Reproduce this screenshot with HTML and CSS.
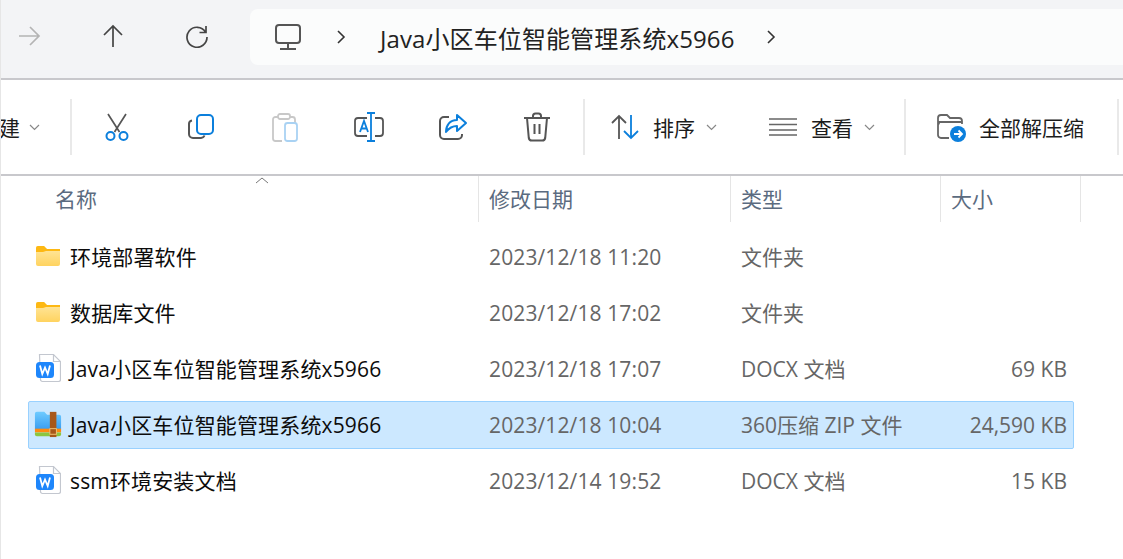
FILE: index.html
```html
<!DOCTYPE html>
<html lang="zh-CN">
<head>
  <meta charset="UTF-8">
  <title>Java小区车位智能管理系统x5966</title>
  <link rel="stylesheet" href="styles.css">
</head>
<body>
  <svg class="defs" width="0" height="0">
    <defs>
      <linearGradient id="folderFill" x1="0" y1="0" x2="0" y2="1">
        <stop offset="0" stop-color="#ffe9a6"/>
        <stop offset="1" stop-color="#ffd35f"/>
      </linearGradient>
      <linearGradient id="zipFill" x1="0" y1="0" x2="0" y2="1">
        <stop offset="0" stop-color="#6fcbff"/>
        <stop offset="1" stop-color="#3a9df0"/>
      </linearGradient>
      <symbol id="folder" viewBox="0 0 26 22">
        <path d="M1 3a2 2 0 0 1 2-2h6l3 3h11a2 2 0 0 1 2 2v13a2 2 0 0 1-2 2H3a2 2 0 0 1-2-2z" fill="url(#folderFill)"/>
        <path d="M1 3a2 2 0 0 1 2-2h6l3 3h13v2H11L8 7H1z" fill="#fdb813"/>
      </symbol>
      <symbol id="wordDoc" viewBox="0 0 26 30">
        <path d="M4.500 1.500h14l7 7v18a2 2 0 0 1-2 2h-16a2 2 0 0 1-2-2z" fill="#fff" stroke="#c3c7cf" stroke-width="1.200"/>
        <path d="M18.500 1.500v7h7" fill="none" stroke="#c3c7cf" stroke-width="1.200"/>
        <rect x="1" y="9" width="18" height="16" rx="3.500" fill="#1e86fb"/>
        <path d="M5 12.500l2.300 8.500 2.700-6.500 2.700 6.500 2.300-8.500" fill="none" stroke="#fff" stroke-width="1.800"/>
      </symbol>
    </defs>
  </svg>

  <header class="nav">
    <button class="nav-btn">
      <svg width="24" height="24" viewBox="0 0 24 24" class="stroke-off"><path d="M2 12h20M13 3l9 9-9 9"/></svg>
    </button>
    <button class="nav-btn">
      <svg width="24" height="24" viewBox="0 0 24 24" class="stroke-dark"><path d="M12 23V2M3 11l9-9 9 9"/></svg>
    </button>
    <button class="nav-btn">
      <svg width="24" height="24" viewBox="0 0 24 24" class="stroke-dark"><path d="M20.500 8A10 10 0 1 0 22 13M21 2v6.500h-6.500"/></svg>
    </button>
    <div class="address">
      <svg width="28" height="28" viewBox="0 0 28 28"><rect x="2" y="2" width="24" height="18" rx="3" fill="none" stroke="#555" stroke-width="2"/><path d="M14 20v6M6 26h16" fill="none" stroke="#555" stroke-width="2"/></svg>
      <svg class="crumb" width="10" height="14" viewBox="0 0 10 14"><path d="M2 1l6 6-6 6" fill="none" stroke="#333" stroke-width="1.600"/></svg>
      <span class="path">Java小区车位智能管理系统x5966</span>
      <svg class="crumb" width="10" height="14" viewBox="0 0 10 14"><path d="M2 1l6 6-6 6" fill="none" stroke="#333" stroke-width="1.600"/></svg>
    </div>
  </header>

  <section class="toolbar">
    <div class="tool-text tool-new">
      <span>新建</span>
      <svg class="caret" width="11" height="7" viewBox="0 0 11 7"><path d="M1 1l4.500 4.500L10 1"/></svg>
    </div>
    <i class="sep"></i>
    <div class="tool-icons">
      <button class="tool-btn">
        <svg width="30" height="30" viewBox="0 0 30 30">
          <path d="M6 2l11.500 18M24 2L12.500 20" fill="none" stroke="#555" stroke-width="1.700"/>
          <circle cx="8.500" cy="24" r="4" fill="none" stroke="#0b7fdc" stroke-width="2"/>
          <circle cx="21.500" cy="24" r="4" fill="none" stroke="#0b7fdc" stroke-width="2"/>
        </svg>
      </button>
      <button class="tool-btn">
        <svg width="30" height="30" viewBox="0 0 30 30">
          <path d="M6 8.500a3.500 3.500 0 0 0-3 3.500v10a4 4 0 0 0 4 4h8a4 4 0 0 0 3.500-2.500" fill="none" stroke="#555" stroke-width="2"/>
          <rect x="11" y="3" width="16" height="19" rx="4" fill="none" stroke="#0b7fdc" stroke-width="2"/>
        </svg>
      </button>
      <button class="tool-btn">
        <svg width="30" height="30" viewBox="0 0 30 30">
          <path d="M8 5H5.500A2.500 2.500 0 0 0 3 7.500v19A2.500 2.500 0 0 0 5.500 29H12M20 5h2.500A2.500 2.500 0 0 1 25 7.500V11" fill="none" stroke="#c8c8c8" stroke-width="1.800"/>
          <rect x="8" y="2" width="12" height="5" rx="2" fill="none" stroke="#c8c8c8" stroke-width="1.800"/>
          <rect x="15" y="11" width="12" height="18" rx="2.500" fill="none" stroke="#a9d2f3" stroke-width="1.800"/>
        </svg>
      </button>
      <button class="tool-btn">
        <svg width="30" height="30" viewBox="0 0 30 30">
          <path d="M13 6H4a3 3 0 0 0-3 3v12a3 3 0 0 0 3 3h9M21 6h5a3 3 0 0 1 3 3v12a3 3 0 0 1-3 3h-5" fill="none" stroke="#555" stroke-width="1.800"/>
          <path d="M13 1h8M13 29h8M17 1v28M6 20l4-11 4 11M7.300 16.500h5.400" fill="none" stroke="#0b7fdc" stroke-width="1.800"/>
        </svg>
      </button>
      <button class="tool-btn">
        <svg width="30" height="30" viewBox="0 0 30 30">
          <path d="M11 5H6a4 4 0 0 0-4 4v14a4 4 0 0 0 4 4h14a4 4 0 0 0 4-4v-1" fill="none" stroke="#555" stroke-width="2"/>
          <path d="M19 3l9 8-9 8v-5c-5 0-8 2-11 6 0-7 4-12 11-12z" fill="none" stroke="#0b7fdc" stroke-width="2" stroke-linejoin="round"/>
        </svg>
      </button>
      <button class="tool-btn">
        <svg width="30" height="30" viewBox="0 0 30 30">
          <path d="M2 6h26M11 6V4a2.500 2.500 0 0 1 2.500-2.500h3A2.500 2.500 0 0 1 19 4v2M5 6l1.800 20a3 3 0 0 0 3 2.500h10.400a3 3 0 0 0 3-2.500L25 6M12.500 12v10M17.500 12v10" fill="none" stroke="#555" stroke-width="2"/>
        </svg>
      </button>
    </div>
    <i class="sep"></i>
    <div class="tool-text tool-sort">
      <svg width="28" height="28" viewBox="0 0 28 28">
        <path d="M8 26V3M1 10l7-7 7 7" fill="none" stroke="#555" stroke-width="1.800"/>
        <path d="M20 2v23M13 18l7 7 7-7" fill="none" stroke="#0b7fdc" stroke-width="1.800"/>
      </svg>
      <span>排序</span>
      <svg class="caret" width="11" height="7" viewBox="0 0 11 7"><path d="M1 1l4.500 4.500L10 1"/></svg>
    </div>
    <div class="tool-text tool-view">
      <svg width="28" height="28" viewBox="0 0 28 28">
        <path d="M0 6h28M0 11.500h28M0 17h28M0 22h28" fill="none" stroke="#666" stroke-width="1.700"/>
      </svg>
      <span>查看</span>
      <svg class="caret" width="11" height="7" viewBox="0 0 11 7"><path d="M1 1l4.500 4.500L10 1"/></svg>
    </div>
    <i class="sep"></i>
    <div class="tool-text tool-extract">
      <svg width="30" height="30" viewBox="0 0 30 30">
        <path d="M12 26H4a3 3 0 0 1-3-3V6a3 3 0 0 1 3-3h6l3 3h9a3 3 0 0 1 3 3v3M1 13l1.500-3h22" fill="none" stroke="#666" stroke-width="1.800"/>
        <circle cx="21" cy="22" r="8" fill="#0b7fdc"/>
        <path d="M17 22h8M21.500 18.500L25 22l-3.500 3.500" fill="none" stroke="#fff" stroke-width="1.800"/>
      </svg>
      <span>全部解压缩</span>
    </div>
    <i class="sep"></i>
  </section>

  <div class="col-head">
    <div class="col col-name">名称
      <svg class="sort-mark" width="14" height="7" viewBox="0 0 14 7"><path d="M1 6l6-5 6 5" fill="none" stroke="#777" stroke-width="1"/></svg>
    </div>
    <div class="col">修改日期</div>
    <div class="col">类型</div>
    <div class="col">大小</div>
  </div>

  <main class="files">
    <div class="row">
      <div class="name"><span class="icon"><svg width="26" height="22"><use href="#folder"/></svg></span>环境部署软件</div>
      <div class="date">2023/12/18 11:20</div>
      <div class="type">文件夹</div>
      <div class="size"></div>
    </div>
    <div class="row">
      <div class="name"><span class="icon"><svg width="26" height="22"><use href="#folder"/></svg></span>数据库文件</div>
      <div class="date">2023/12/18 17:02</div>
      <div class="type">文件夹</div>
      <div class="size"></div>
    </div>
    <div class="row">
      <div class="name"><span class="icon"><svg width="26" height="30"><use href="#wordDoc"/></svg></span>Java小区车位智能管理系统x5966</div>
      <div class="date">2023/12/18 17:07</div>
      <div class="type">DOCX 文档</div>
      <div class="size">69 KB</div>
    </div>
    <div class="row selected">
      <div class="name">
        <span class="icon">
          <svg width="28" height="28" viewBox="0 0 30 28">
            <path d="M1 3a2 2 0 0 1 2-2h8l3 3h13a2 2 0 0 1 2 2v14H1z" fill="url(#zipFill)"/>
            <rect x="1" y="19" width="28" height="4" fill="#ff8a0f"/>
            <path d="M1 23h28v2a2 2 0 0 1-2 2H3a2 2 0 0 1-2-2z" fill="#8cc63f"/>
            <rect x="17" y="1" width="7" height="27" fill="#a8581a"/>
            <rect x="17" y="19" width="7" height="6" fill="none" stroke="#f2c879" stroke-width="1"/>
          </svg>
        </span>Java小区车位智能管理系统x5966</div>
      <div class="date">2023/12/18 10:04</div>
      <div class="type">360压缩 ZIP 文件</div>
      <div class="size">24,590 KB</div>
    </div>
    <div class="row">
      <div class="name"><span class="icon"><svg width="26" height="30"><use href="#wordDoc"/></svg></span>ssm环境安装文档</div>
      <div class="date">2023/12/14 19:52</div>
      <div class="type">DOCX 文档</div>
      <div class="size">15 KB</div>
    </div>
  </main>
</body>
</html>
```

FILE: styles.css
```css
* {
  box-sizing: border-box;
}
html, body {
  height: 100%;
}
body {
  margin: 0;
  overflow: hidden;
  background: #fff;
  color: #666;
  font-family: "Open Sans", "Noto Sans CJK SC", sans-serif;
  font-size: 21px;
  border-left: 1px solid #e6e6e6;
}
.defs {
  position: absolute;
}
button {
  border: none;
  background: none;
  padding: 0;
}

/* top bar */
.nav {
  display: flex;
  height: 80px;
  margin-left: -1px;
  padding: 9px 0 13px;
  background: #f3f4f6;
  border-bottom: 2px solid #c8c8cc;
}
.nav-btn {
  display: flex;
  align-items: center;
  justify-content: center;
  flex: none;
  width: 84px;
  margin-top: -2px;
}
.nav-btn:first-child {
  margin-left: -13px;
}
.stroke-off path, .stroke-dark path {
  fill: none;
  stroke-width: 1.700;
}
.stroke-off path {
  stroke: #b4b4b4;
}
.stroke-dark path {
  stroke: #444;
}
.address {
  flex: 1;
  display: flex;
  align-items: center;
  margin-left: 11px;
  padding-left: 24px;
  background: #fbfcfc;
  border-radius: 8px 0 0 8px;
  color: #222;
  font-size: 24px;
}
.crumb {
  margin-left: 34px;
}
.path {
  margin-left: 34px;
  white-space: nowrap;
  letter-spacing: 0.1px;
}
.path + .crumb {
  margin-left: 32px;
}

/* command bar */
.toolbar {
  display: flex;
  align-items: center;
  height: 96px;
  border-bottom: 2px solid #c8c8cc;
  color: #1c1c1c;
}
.sep {
  flex: none;
  width: 2px;
  height: 56px;
  background: #e9e9e9;
}
.tool-text {
  display: flex;
  align-items: center;
  flex: none;
  white-space: nowrap;
}
.toolbar .tool-new {
  width: 70px;
  margin-left: -23px;
  margin-right: 22px;
  gap: 9px;
}
.tool-new .caret {
  margin-left: 0;
}
.tool-icons {
  display: flex;
  flex: none;
  width: 511px;
  padding-left: 3px;
}
.tool-btn {
  display: flex;
  align-items: center;
  justify-content: center;
  width: 84px;
  height: 40px;
}
.caret {
  margin-left: 10px;
}
.caret path {
  fill: none;
  stroke: #888;
  stroke-width: 1.200;
}
.tool-sort {
  margin-left: 26px;
  gap: 14px;
}
.tool-sort .caret, .tool-view .caret {
  margin-left: -3px;
}
.tool-view {
  margin-left: 52px;
  gap: 14px;
}
.tool-view + .sep {
  margin-left: 29px;
}
.tool-extract {
  width: 211px;
  padding-left: 31px;
  gap: 12px;
}

/* column headers */
.col-head {
  display: grid;
  grid-template-columns: 478px 252px 210px 140px;
  height: 46px;
  color: #5b6b80;
}
.col {
  position: relative;
  display: flex;
  align-items: center;
  padding-left: 10px;
  padding-bottom: 2px;
  border-right: 1px solid #e5e5e5;
}
.col-name {
  padding-left: 54px;
}
.sort-mark {
  position: absolute;
  top: 1px;
  left: 254px;
}

/* file rows */
.files {
  margin-left: 27px;
  width: 1046px;
  padding-top: 12px;
}
.row {
  display: grid;
  grid-template-columns: 460px 252px 200px 1fr;
  align-items: center;
  height: 46px;
  margin-bottom: 10px;
  border: 1px solid transparent;
  border-radius: 2px;
}
.row.selected {
  height: 48px;
  margin-top: -1px;
  margin-bottom: 9px;
  background: #cce8ff;
  border-color: #99d1ff;
}
.name {
  display: flex;
  align-items: center;
  color: #0c0c0c;
  white-space: nowrap;
  letter-spacing: 0.15px;
  padding-bottom: 2px;
}
.date {
  letter-spacing: 0.12px;
}
.type {
  padding-bottom: 2px;
}
.icon {
  display: flex;
  justify-content: center;
  flex: none;
  width: 34px;
  margin-left: 2px;
  margin-right: 5px;
}
.size {
  padding-right: 6px;
  text-align: right;
}
```
